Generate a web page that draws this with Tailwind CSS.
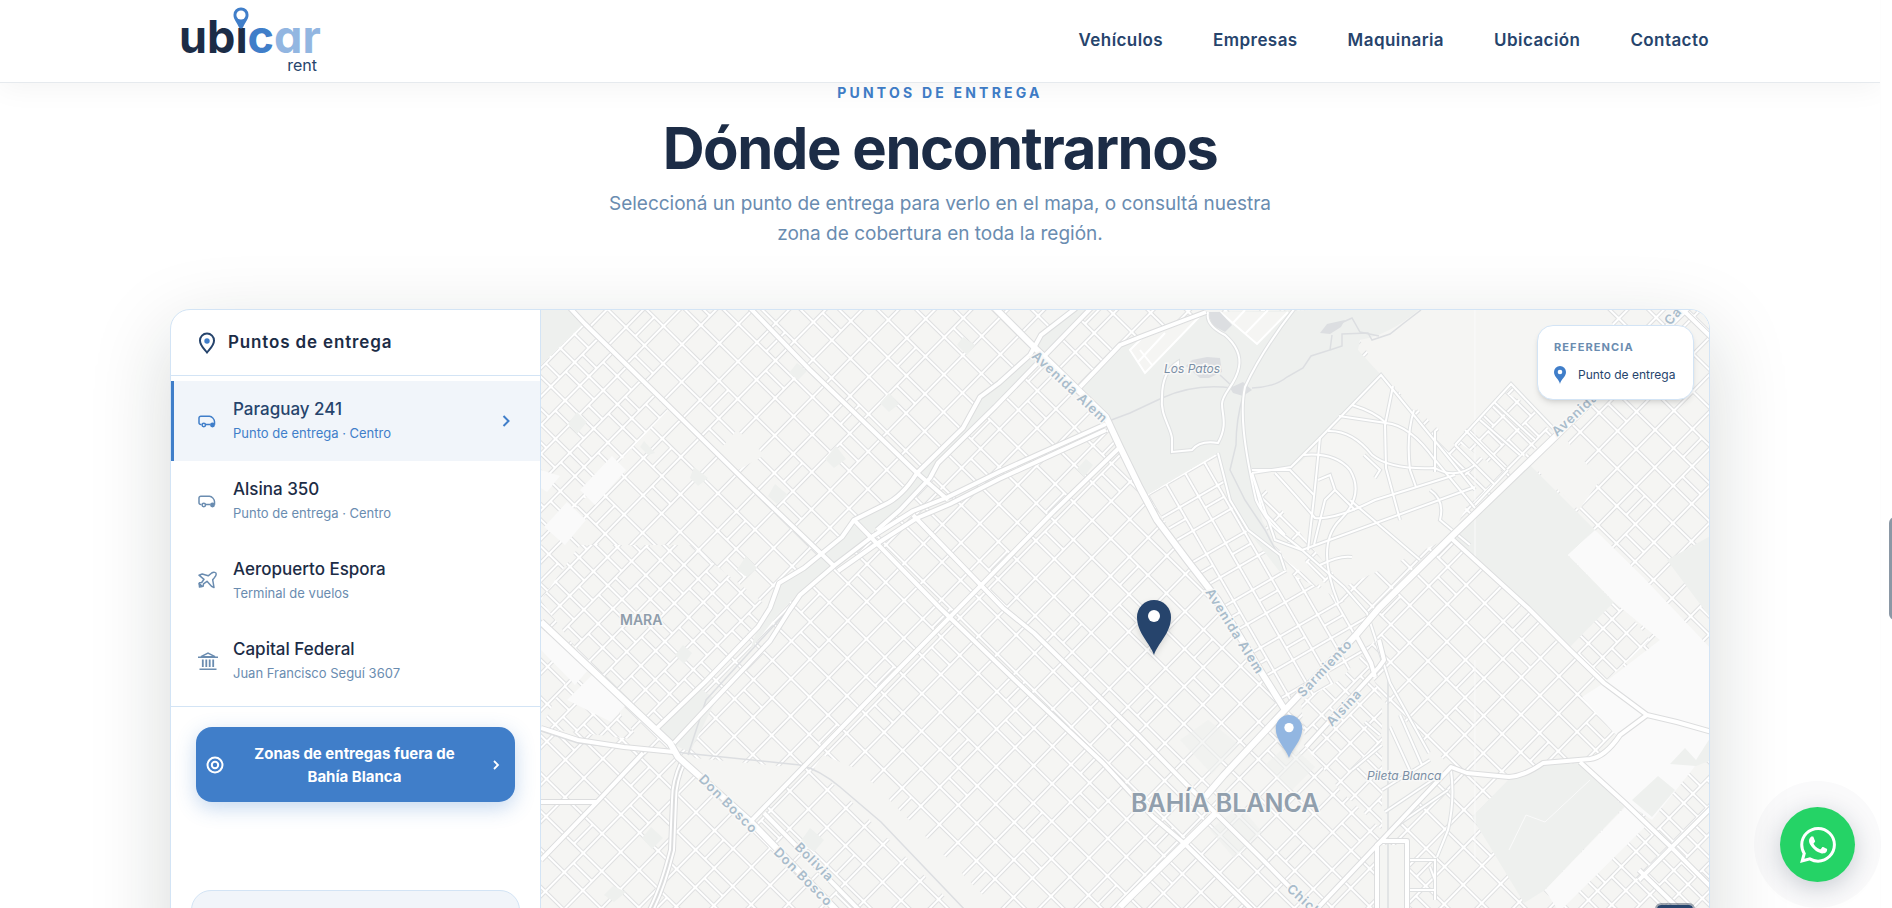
<!DOCTYPE html>
<html lang="es">
	<head>
		<meta charset="utf-8">
		<meta name="viewport" content="width=device-width, initial-scale=1">
		<title>Ubicar Rent - Puntos de entrega</title>
		<script src="https://cdn.jsdelivr.net/npm/@tailwindcss/browser@4"></script>
	</head>
	<body class="h-screen overflow-hidden flex bg-white text-[#1c2c46] font-['Inter','Liberation_Sans',sans-serif]">
		<div class="flex-1 min-w-0 h-screen overflow-hidden">
			<header class="relative z-20 h-[83px] bg-white border-b border-[#e6eaee] shadow-[0_4px_30px_rgba(0,0,0,0.05)]">
				<div class="mx-auto max-w-[1540px] h-full px-px flex items-center justify-between">
					<a href="#" class="relative block w-[150px] h-[72px] pl-2 pt-3">
						<span class="block text-[45px] leading-10 font-bold [font-feature-settings:'cv11'] text-[#1c2c46]">ubi<span class="text-[#407ec9]">c</span><span class="text-[#92b6e1]">ar</span></span>
						<span class="absolute right-1 bottom-1 text-base leading-4 text-[#26446c]">rent</span>
						<svg class="absolute left-[62px] top-[2px] w-4 h-[22px]" viewBox="0 0 16 22">
							<path d="M2 12h12v9H2z" fill="#fff"/>
							<path d="M8 .5a7.300 7.300 0 0 0-7.500 7.400C.5 12.500 4 15 6 20.500q2 2 4 0C12 15 15.500 12.500 15.500 7.900A7.300 7.300 0 0 0 8 .5z" fill="#407ec9"/>
							<circle cx="8" cy="8" r="4.600" fill="#fff"/>
						</svg>
					</a>
					<nav class="flex items-center gap-[50px] text-[17px] font-semibold tracking-wide text-[#26446c]">
						<a href="#vehiculos">Vehículos</a>
						<a href="#empresas">Empresas</a>
						<a href="#maquinaria">Maquinaria</a>
						<a href="#ubicacion">Ubicación</a>
						<a href="#contacto">Contacto</a>
					</nav>
				</div>
			</header>

			<main id="ubicacion" class="mx-auto max-w-[1540px]">
				<div class="text-center">
					<p class="text-sm leading-5 font-bold tracking-[0.23em] text-[#407ec9]">PUNTOS DE ENTREGA</p>
					<h1 class="mt-3 text-[58px] leading-[66px] font-bold tracking-tight">Dónde encontrarnos</h1>
					<p class="mx-auto mt-2 max-w-[700px] text-[19px] leading-[30px] text-[#6a8cb0]">Seleccioná un punto de entrega para verlo en el mapa, o consultá nuestra zona de cobertura en toda la región.</p>
				</div>

				<section class="mt-[60px] h-[660px] flex overflow-hidden rounded-[20px] border border-[#d3e4f5] bg-white shadow-[0_24px_80px_rgba(20,36,30,0.17)]">
					<aside class="w-[370px] shrink-0 border-r border-[#d3e4f5]">
						<div class="h-[66px] px-[27px] flex items-center gap-3 border-b border-[#d3e4f5]">
							<svg class="w-[18px] h-[22px]" viewBox="0 0 18 22" fill="none">
								<path d="M9 1.500a7 7 0 0 0-7 7.200c0 4.600 4 8 7 11.800 3-3.800 7-7.200 7-11.800a7 7 0 0 0-7-7.200z" stroke="#26446c" stroke-width="2"/>
								<circle cx="9" cy="9" r="2.700" fill="#407ec9"/>
							</svg>
							<h2 class="text-[17px] font-semibold tracking-wider">Puntos de entrega</h2>
						</div>

						<div class="py-[5px] border-b border-[#d3e4f5]">
							<button class="w-full h-20 pl-6 pr-[26px] flex items-center text-left bg-[#f1f5fa] border-l-3 border-[#407ec9] text-[#407ec9]">
								<svg class="w-[18px] h-4 mr-[17px]" viewBox="0 0 18 16" fill="none" stroke="currentColor" stroke-width="1.500">
									<path d="M3.500 11.500H2.800a1.800 1.800 0 0 1-1.800-1.800V5a1.800 1.800 0 0 1 1.800-1.800h8.700c2.500 0 5 3.300 5 5.500v3M8 11.500h4.500"/>
									<circle cx="5.800" cy="12" r="1.700"/><circle cx="14.500" cy="12" r="1.700" fill="currentColor"/>
								</svg>
								<span class="flex-1">
									<span class="block text-[17px] leading-6 font-medium text-[#26446c]">Paraguay 241</span>
									<span class="block text-[13px] leading-6">Punto de entrega · Centro</span>
								</span>
								<svg class="w-4 h-4" viewBox="0 0 16 16" fill="none" stroke="currentColor" stroke-width="2"><path d="M5.500 3l5 5-5 5"/></svg>
							</button>
							<button class="w-full h-20 px-[27px] flex items-center text-left text-[#6a8cb0]">
								<svg class="w-[18px] h-4 mr-[17px]" viewBox="0 0 18 16" fill="none" stroke="currentColor" stroke-width="1.500">
									<path d="M3.500 11.500H2.800a1.800 1.800 0 0 1-1.800-1.800V5a1.800 1.800 0 0 1 1.800-1.800h8.700c2.500 0 5 3.300 5 5.500v3M8 11.500h4.500"/>
									<circle cx="5.800" cy="12" r="1.700"/><circle cx="14.500" cy="12" r="1.700" fill="currentColor"/>
								</svg>
								<span class="flex-1">
									<span class="block text-[17px] leading-6 font-medium text-[#1c2c46]">Alsina 350</span>
									<span class="block text-[13px] leading-6">Punto de entrega · Centro</span>
								</span>
							</button>
							<button class="w-full h-20 px-[27px] flex items-center text-left text-[#6a8cb0]">
								<svg class="w-5 h-5 mr-[15px]" viewBox="0 0 20 20" fill="none" stroke="currentColor" stroke-width="1.500" stroke-linejoin="round">
									<path d="M1 4.200l3.200-1.200 6 1.800 3.500-2.800c2-1.300 4.500-.7 4.500 1 0 1.500-.8 2.600-1.700 3.600l-1.800 2.200 1.300 7.700-2.500-1.200-4.500-5-3.500 2.500-.3 2.400-1.500-.2L1.200 13l.3-1.300 2.200-.2L6 8.300z"/>
									<path d="M1.200 12.500l3 3-2.700.6z" fill="currentColor"/>
								</svg>
								<span class="flex-1">
									<span class="block text-[17px] leading-6 font-medium text-[#1c2c46]">Aeropuerto Espora</span>
									<span class="block text-[13px] leading-6">Terminal de vuelos</span>
								</span>
							</button>
							<button class="w-full h-20 px-[27px] flex items-center text-left text-[#6a8cb0]">
								<svg class="w-5 h-5 mr-[15px]" viewBox="0 0 20 20" fill="none" stroke="currentColor" stroke-width="1.500">
									<path d="M3 5.700L10 2l7 3.700z"/>
									<path d="M0 6.200h20M1.500 18.200h17"/>
									<path d="M4.800 8.500v7.500M8.300 8.500v7.500M11.700 8.500v7.500M15.200 8.500v7.500" stroke-width="1.800"/>
								</svg>
								<span class="flex-1">
									<span class="block text-[17px] leading-6 font-medium text-[#1c2c46]">Capital Federal</span>
									<span class="block text-[13px] leading-6">Juan Francisco Seguí 3607</span>
								</span>
							</button>
						</div>

						<div class="px-[25px] pt-5">
							<button class="w-full h-[75px] pl-[10px] pr-3 flex items-center rounded-2xl bg-[#407ec9] text-white shadow-[0_6px_20px_rgba(64,126,201,0.3)]">
								<svg class="w-[18px] h-[18px]" viewBox="0 0 18 18" fill="none" stroke="currentColor" stroke-width="2"><circle cx="9" cy="9" r="7.500"/><circle cx="9" cy="9" r="3.200"/></svg>
								<span class="flex-1 pl-4 pr-5 text-[15px] leading-[23px] font-bold">Zonas de entregas fuera de<br>Bahía Blanca</span>
								<svg class="w-[14px] h-[14px]" viewBox="0 0 14 14" fill="none" stroke="currentColor" stroke-width="1.800"><path d="M5 3l4 4-4 4"/></svg>
							</button>
						</div>

						<div class="mx-5 mt-[88px] h-40 rounded-[20px] border border-[#d3e4f5] bg-[#f1f5fa]"></div>
					</aside>

					<div class="relative flex-1 min-w-0 bg-[#f5f5f3]">
						<svg class="block w-full h-full" viewBox="541 310 1168 658" preserveAspectRatio="xMinYMin slice">
							<defs>
								<!-- city blocks, one tile holds a few merged and split ones -->
								<pattern id="blocks" width="104" height="81" patternUnits="userSpaceOnUse" patternTransform="translate(570 310) rotate(44.500)">
									<rect width="104" height="81" fill="#fff"/>
									<g fill="#f5f5f3" stroke="#dfe0e1">
										<path d="M1.500 1.500h23v24h-23zM27.500 1.500h23v24h-23zM53.500 1.500h23v24h-23zM79.500 1.500h23v24h-23z"/>
										<path d="M1.500 28.500h23v24h-23zM27.500 28.500h23v24h-23zM53.500 28.500h10v24h-10zM66.500 28.500h10v24h-10zM79.500 28.500h23v24h-23z"/>
										<path d="M1.500 55.500h23v24h-23zM27.500 55.500h23v24h-23zM53.500 55.500h23v24h-23zM79.500 55.500h23v11h-23zM79.500 69.500h23v10h-23z"/>
									</g>
								</pattern>
								<pattern id="small" width="60" height="68" patternUnits="userSpaceOnUse" patternTransform="translate(570 310) rotate(44.500)">
									<rect width="60" height="68" fill="#fff"/>
									<g fill="#f5f5f3" stroke="#dfe0e1">
										<path d="M1.500 1.500h17v11h-17zM21.500 1.500h17v11h-17zM41.500 1.500h17v20h-17z"/>
										<path d="M1.500 15.500h17v17h-17zM21.500 15.500h17v17h-17zM41.500 24.500h17v8h-17z"/>
										<path d="M1.500 35.500h17v10h-17zM21.500 35.500h17v18h-17zM41.500 35.500h17v10h-17z"/>
										<path d="M1.500 48.500h17v18h-17zM21.500 56.500h17v10h-17zM41.500 48.500h17v18h-17z"/>
									</g>
								</pattern>
								<pattern id="tilted" width="54" height="44" patternUnits="userSpaceOnUse" patternTransform="translate(1147 495) rotate(60)">
									<rect width="54" height="44" fill="#fff"/>
									<path d="M1.500 1.500h24v19h-24zM28.500 1.500h24v19h-24zM1.500 23.500h24v19h-24zM28.500 23.500h10v19h-10zM41.500 23.500h11v19h-11z" fill="#f5f5f3" stroke="#dfe0e1"/>
								</pattern>
								<path id="marker" d="M0 0C-4-12-17-22-17-38a17 17 0 0 1 34 0C17-22 4-12 0 0z"/>

								<g id="avenues" fill="none" stroke-linejoin="round">
									<path d="M570 308L585 324 685 422 737 473 835 567"/>
									<path d="M750 308L810 370 917 473 948 500M913 515L1003 608 1034 633 1140 737 1187 785 1260 857 1314 912"/>
									<path d="M854 520L940 608 1018 683 1103 763 1153 817 1186 845 1254 912"/>
									<path d="M1120 447L1053 512 951 616 886 682 823 747 752 820"/>
									<path d="M1106 424L999 472 948 497 913 511 873 536 835 565 800 595 789 611 770 641 716 698 674 743"/>
									<path d="M1106 430L999 479 950 504 917 518 875 545 838 571"/>
									<path d="M1076 308L1041 335 1030 355 999 383 980 397 963 428 917 473Q902 497 884 505L854 520 842 537 804 568 779 583 770 608 758 627 705 682 655 730"/>
									<path d="M1091 308L995 407 938 463 930 478 900 510 877 530"/>
									<path d="M541 728L578 740 624 747 674 752M643 753L597 802 541 860M541 802H597"/>
									<path d="M764 813L861 912"/>
									<path d="M1451 538L1528 608 1570 650 1604 683 1647 715Q1680 722 1712 732M1647 715L1620 735Q1605 757 1590 759L1543 763Q1525 776 1509 777L1467 773 1451 767 1382 840 1314 912"/>
									<path d="M1580 762L1625 803 1671 847 1712 888M1712 807L1639 880M1639 870L1680 910"/>
									<path d="M1377 912V845L1382 841H1407V912M1080 387L1120 345 1140 337 1206 312"/>
									<path d="M1356 635L1371 663 1375 677M1379 640L1384 660 1379 667 1306 747M1681 308L1712 338"/>
								</g>
								<g id="highways" fill="none" stroke-linejoin="round">
									<path d="M995 308L1034 347 1106 417 1120 447 1140 488 1157 520 1187 560 1218 600 1260 670 1285 710"/>
									<path d="M541 622L590 668 670 743 678 757 752 823 838 912"/>
									<path d="M1690 305L1555 437 1528 463 1451 537 1379 608 1356 635 1283 712 1224 775 1205 797M1216 813L1130 897 1120 907"/>
								</g>
								<g id="lanes" fill="none">
									<!-- park drive and the rail side streets -->
									<path d="M1208 312Q1205 325 1225 335 1242 350 1239 367C1236 385 1222 393 1222 404S1228 425 1218 443Q1200 440 1192 450L1172 452 1172 438C1170 425 1160 415 1162 397 1162 380 1168 368 1178 362V368"/>
									<path d="M1295 308Q1262 350 1245 387C1240 410 1243 443 1256 500 1270 530 1285 535 1302 550L1344 587 1367 613 1390 683 1429 753M1252 473L1262 510 1285 535M1218 453L1230 500 1248 530 1280 555 1285 570"/>
									<!-- garden suburb -->
									<path d="M1252 473L1291 467 1321 437 1381 375 1475 490M1252 473L1275 540 1302 550M1393 386L1385 425 1386 468 1400 520M1414 410Q1406 435 1410 470L1416 487M1435 431V472M1352 405Q1375 412 1386 423 1410 425 1435 460L1475 508"/>
									<path d="M1339 416L1386 423M1328 431Q1352 430 1372 455 1390 470 1435 468 1455 480 1475 465M1303 455Q1335 452 1350 470 1365 495 1340 520 1315 545 1338 602M1275 473Q1300 500 1315 518 1335 520 1375 500L1455 475M1320 437Q1316 480 1312 515L1308 550"/>
									<path d="M1302 550L1475 487M1314 545L1325 500 1335 490 1330 475 1318 480M1350 500L1420 560M1364 455L1380 470 1375 478M1252 470L1290 470 1314 495M1320 565Q1340 555 1352 557M1335 490L1355 510M1430 490Q1445 500 1440 520L1470 545"/>
									<path d="M1455 445L1511 384 1555 430M1455 445L1495 485M1465 430L1505 470M1480 420L1520 455M1495 403L1535 440M1508 470L1475 505"/>
									<path d="M1390 727L1412 775M1400 715L1422 765M1382 790L1430 760M1385 812L1440 775M1390 830L1448 790M1451 770Q1455 800 1448 830L1437 857M1407 860H1435V890H1407M1435 900V880L1430 867M1382 745L1352 770M1365 722L1380 735"/>
								</g>
							</defs>

							<rect x="541" y="310" width="1168" height="900" fill="url(#blocks)"/>

							<!-- denser quarters -->
							<g fill="url(#small)">
								<path d="M541 365L582 325 668 410 541 545z"/>
								<path d="M541 600L580 545 690 545 770 608 705 682 655 730 590 668z"/>
								<path d="M1295 650L1356 635 1382 700 1430 760 1382 830 1340 790 1306 747z"/>
								<path d="M1555 640L1610 590 1650 640 1604 683z"/>
								<path d="M1627 803L1712 745V912H1559z"/>
								<path d="M1500 470L1555 437 1560 420 1480 380 1440 430z"/>
								<path d="M555 700L580 660 640 740 541 728z"/>
							</g>
							<path d="M1147 495L1218 453 1250 530 1287 572 1367 613 1375 640 1340 680 1285 710 1218 600z" fill="url(#tilted)"/>
							<path d="M1252 473L1291 467 1381 375 1475 490 1451 537 1344 587z" fill="#f5f5f3"/>
							<path d="M1340 600L1285 560 1256 505 1290 545z" fill="#f5f5f3"/>
							<path d="M1360 340L1421 308H1600L1640 360 1555 437 1511 384 1455 445 1381 375z" fill="#f5f5f3"/>
							<path d="M1382 700L1400 715 1451 767 1382 840z" fill="#f5f5f3"/>
							<path d="M1377 845H1407V912H1377z" fill="#f5f5f3"/>
							<path d="M683 757L800 768 823 750 752 820z" fill="#f5f5f3"/>
							<path d="M814 768L840 790 960 912H1000L860 770 823 755z" fill="#f5f5f3"/>
							<path d="M715 455L737 430 765 455 738 470z" fill="#f5f5f3"/>
							<path d="M1530 463L1562 435 1600 480 1579 510z" fill="#f5f5f3"/>

							<!-- parks -->
							<g fill="#eef0ee">
								<path d="M541 310H570L582 325 541 365z"/>
								<path d="M1120 347L1206 312 1421 308Q1390 335 1360 340L1358 350 1381 375 1321 437Q1300 467 1291 467L1252 473 1262 520 1287 570 1280 572 1245 527 1230 500 1218 453 1147 495 1106 417 1080 387z"/>
								<path d="M1530 465L1595 530 1568 555 1614 602 1570 647 1520 600 1455 538z"/>
								<path d="M1580 763L1624 807 1545 890 1524 903 1472 817 1509 779 1543 765z"/>
								<path d="M1076 310H1091L995 407 938 463 930 478 875 530 838 565 800 592 780 612 750 650 758 627 770 608 779 583 804 568 842 537 854 520 884 505 917 473 963 428 980 397 999 383 1030 355 1041 335z"/>
								<path d="M655 732L700 688 716 700 690 752 674 745z"/>
								<path d="M1667 560L1712 535V620z"/>
								<path d="M577 412L587 422 577 434 568 424zM644 441L655 453 648 455 640 447zM694 467L708 478 698 486 690 478zM797 363L807 371 798 380 789 373zM889 393L899 404 889 412 880 403zM836 446L846 459 834 468 825 459zM775 484L788 495 777 504 768 496zM746 556L757 568 747 577 737 570zM963 337L975 345 967 355 957 345zM1086 459L1093 465 1084 477 1077 469z"/>
								<path d="M683 645L692 653 684 664 675 655zM810 828L824 840 814 852 800 842zM651 827L663 838 652 849 642 838zM613 886L626 892 614 902 604 895z"/>
								<path d="M1180 740l28-20 30 24-26 30zM1210 830l30-24 22 26-28 26zM1265 765l24-22 26 24-24 24z" opacity=".6"/>
							</g>

							<!-- industrial and railway land -->
							<g fill="#fafafa">
								<path d="M544 527L565 545 586 520 567 502zM541 470L560 476 547 492 541 488zM580 490L612 456 626 470 595 505z"/>
								<path d="M594 673L567 700 611 722 626 705zM541 628L590 668 575 685 541 650z"/>
								<path d="M1595 530L1643 577 1712 650V732L1647 715 1604 683 1660 640 1614 602 1568 555z"/>
								<path d="M1582 697L1604 683 1647 715 1712 732V745L1652 820 1627 803 1580 760 1605 752 1616 735z"/>
								<path d="M1627 805L1650 822 1559 912 1545 890z"/>
							</g>
							<path d="M1670 764L1685 748 1696 760 1712 735V760L1696 766zM1632 800L1658 776 1675 790 1652 817z" fill="#eef0ee"/>

							<g fill="#f5f5f3" stroke="#fff" stroke-width="2">
								<path d="M1130 350L1145 373 1200 316 1142 338zM1138 362L1165 333M1152 365L1140 350M1220 312L1257 344 1288 312M1232 324L1245 310M1245 334L1268 310"/>
							</g>

							<!-- water -->
							<g fill="#dcdee1">
								<path d="M1192 360L1207 357 1220 358 1222 372 1209 378 1200 378 1186 366z"/>
								<path d="M1230 388L1243 382 1252 390 1243 396 1233 393z"/>
								<path d="M1320 333L1327 324 1345 320 1341 327 1330 334z"/>
								<path d="M1208 312H1220L1232 325 1225 332 1212 325z"/>
							</g>
							<g fill="none" stroke="#dcdee1" stroke-width="1.500">
								<path d="M1252 388Q1275 387 1287 377L1303 368 1311 356 1330 350 1332 335M1330 350L1342 346 1342 334 1368 333 1372 340 1390 334 1404 323 1421 310"/>
								<path d="M1106 422L1130 413 1162 398Q1195 383 1232 388M1220 375L1233 387M1332 327L1352 318 1360 332 1379 336"/>
								<path d="M1243 396Q1236 420 1236 445L1230 470 1245 500 1265 530 1285 568M674 752L800 765Q820 770 840 787L881 822 967 912M541 731L578 743 674 754M688 755L706 700 790 608M1388 680V910"/>
							</g>
							<path d="M1475 310V560M1475 660V860M1509 850L1526 815 1545 822 1590 780" fill="none" stroke="#fafafa"/>

							<g stroke="#dfe1e2" stroke-width="4"><use href="#lanes"/></g>
							<g stroke="#fff" stroke-width="2"><use href="#lanes"/></g>
							<path d="M684 760Q674 780 674 800L672 850Q662 890 650 912" fill="none" stroke="#dcddde" stroke-width="8"/>
							<path d="M684 760Q674 780 674 800L672 850Q662 890 650 912" fill="none" stroke="#fff" stroke-width="6"/>
							<path d="M684 760Q674 780 674 800L672 850Q662 890 650 912" fill="none" stroke="#dcddde" stroke-width="2"/>
							<g stroke="#dcddde" stroke-width="6"><use href="#avenues"/></g>
							<g stroke="#dcddde" stroke-width="8"><use href="#highways"/></g>
							<g stroke="#fff" stroke-width="4"><use href="#avenues"/></g>
							<g stroke="#fff" stroke-width="6"><use href="#highways"/></g>

							<g class="font-['Inter',sans-serif] font-semibold" fill="#a9bccb" stroke="#f8f8f7" stroke-width="3" paint-order="stroke" font-size="13" letter-spacing="1">
								<text transform="translate(1031 357) rotate(43)">Avenida Alem</text>
								<text transform="translate(1205 592) rotate(58)">Avenida Alem</text>
								<text transform="translate(1303 698) rotate(-47)">Sarmiento</text>
								<text transform="translate(1332 727) rotate(-47)">Alsina</text>
								<text transform="translate(1557 437) rotate(-43)">Avenida</text>
								<text transform="translate(1670 326) rotate(-48)">Ca</text>
								<text transform="translate(698 780) rotate(45)">Don Bosco</text>
								<text transform="translate(773 853) rotate(45)">Don Bosco</text>
								<text transform="translate(794 848) rotate(45)">Bolivia</text>
								<text transform="translate(1286 890) rotate(42)">Chiclana</text>
							</g>
							<g class="font-['Inter',sans-serif]" stroke="#f8f8f7" stroke-width="3" paint-order="stroke">
								<text x="620" y="625" font-size="14" font-weight="600" fill="#8f9dab">MARA</text>
								<text x="1131" y="812" font-size="25" font-weight="600" fill="#919fad">BAHÍA BLANCA</text>
								<text x="1164" y="373" font-size="12" font-style="italic" fill="#7b8fa5">Los Patos</text>
								<text x="1367" y="780" font-size="12" font-style="italic" fill="#7b8fa5">Pileta Blanca</text>
							</g>

							<g class="drop-shadow-md">
								<use href="#marker" x="1154" y="655" fill="#26446c"/>
								<circle cx="1154" cy="616" r="6" fill="#fff"/>
							</g>
							<g class="drop-shadow-sm" transform="translate(1289 758) scale(.78)">
								<use href="#marker" fill="#92b6e1"/>
								<circle cy="-39" r="6" fill="#fff"/>
							</g>
						</svg>

						<div class="absolute top-[15px] right-[15px] w-[157px] h-[75px] px-4 pt-3 rounded-2xl border border-[#d3e4f5] bg-white shadow-md">
							<p class="text-[11px] leading-[18px] font-bold tracking-widest text-[#6a8cb0]">REFERENCIA</p>
							<p class="mt-[9px] flex items-center gap-3 text-xs leading-5 whitespace-nowrap text-[#26446c]">
								<svg class="w-3 h-[18px] shrink-0" viewBox="0 0 12 18"><path d="M6 18C5 13 0 11 0 6a6 6 0 0 1 12 0c0 5-5 7-6 12z" fill="#407ec9"/><circle cx="6" cy="6" r="2.300" fill="#fff"/></svg>
								Punto de entrega
							</p>
						</div>

						<div class="absolute top-[593px] right-[14px] w-10 overflow-hidden rounded-md border-2 border-[#1c2c46]/40">
							<button class="block w-full h-8 bg-[#26446c] text-white text-xl font-bold" aria-label="Acercar">+</button>
						</div>
					</div>
				</section>
			</main>
		</div>

		<!-- scroll track -->
		<div class="w-3 h-screen shrink-0 relative z-30 bg-white border-l border-[#fdfdfd]">
			<div class="absolute left-2 top-[517px] w-3 h-[103px] rounded-md bg-[#8b98a5]"></div>
		</div>

		<a href="#whatsapp" aria-label="WhatsApp" class="fixed z-40 right-[37px] bottom-[26px] w-[75px] h-[75px] rounded-full bg-[#25d366] flex items-center justify-center shadow-[0_6px_24px_rgba(28,44,70,0.22),0_0_0_26px_rgba(28,44,70,0.025)]">
			<svg class="w-9 h-9" viewBox="0 0 24 24" fill="#fff">
				<path d="M17.472 14.382c-.297-.149-1.758-.867-2.030-.967-.273-.099-.471-.148-.67.150-.197.297-.767.966-.940 1.164-.173.199-.347.223-.644.075-.297-.150-1.255-.463-2.390-1.475-.883-.788-1.480-1.761-1.653-2.059-.173-.297-.018-.458.130-.606.134-.133.298-.347.446-.520.149-.174.198-.298.298-.497.099-.198.050-.371-.025-.520-.075-.149-.669-1.612-.916-2.207-.242-.579-.487-.500-.669-.510-.173-.008-.371-.010-.570-.010-.198 0-.520.074-.792.372-.272.297-1.040 1.016-1.040 2.479 0 1.462 1.065 2.875 1.213 3.074.149.198 2.096 3.200 5.077 4.487.709.306 1.262.489 1.694.625.712.227 1.360.195 1.871.118.571-.085 1.758-.719 2.006-1.413.248-.694.248-1.289.173-1.413-.074-.124-.272-.198-.570-.347m-5.421 7.403h-.004a9.870 9.870 0 0 1-5.031-1.378l-.361-.214-3.741.982.998-3.648-.235-.374a9.860 9.860 0 0 1-1.510-5.260c.001-5.450 4.436-9.884 9.888-9.884 2.640 0 5.122 1.030 6.988 2.898a9.825 9.825 0 0 1 2.893 6.994c-.003 5.450-4.437 9.884-9.885 9.884m8.413-18.297A11.815 11.815 0 0 0 12.050 0C5.495 0 .160 5.335.157 11.892c0 2.096.547 4.142 1.588 5.945L.057 24l6.305-1.654a11.882 11.882 0 0 0 5.683 1.448h.005c6.554 0 11.890-5.335 11.893-11.893a11.821 11.821 0 0 0-3.480-8.413z"/>
			</svg>
		</a>
	</body>
</html>
